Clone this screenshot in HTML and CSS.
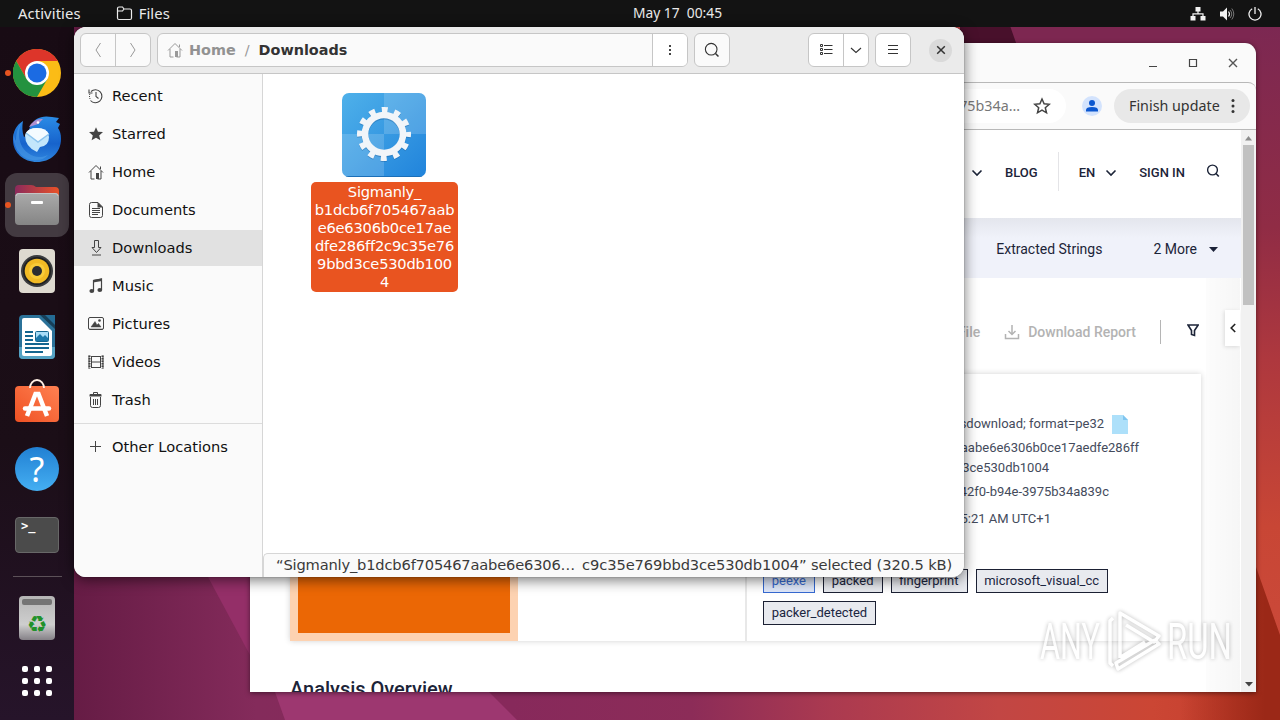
FILE: index.html
```html
<!DOCTYPE html>
<html lang="en">
<head>
    <meta charset="utf-8">
    <title>Desktop</title>
    <link rel="stylesheet" href="styles.css">
</head>
<body>
    <svg class="symbols" width="0" height="0">
        <symbol id="home" viewBox="0 0 16 16">
            <path d="M1 8.500 8 1.500l7 7M3 7v8h3.500M9.500 15H13V7M12.500 2.500V5" fill="none" stroke="currentColor"/>
            <path d="M8 9h3v6H8z" fill="currentColor"/>
        </symbol>
        <symbol id="chevron" viewBox="0 0 12 12">
            <path d="M1.500 3.500 6 8l4.500-4.500" fill="none" stroke="currentColor" stroke-width="1.600"/>
        </symbol>
    </svg>

    <svg class="wallpaper" viewBox="0 0 1280 720">
        <defs>
            <linearGradient id="wall" x1="0" x2="1" y1="0" y2="0">
                <stop offset=".058" stop-color="#661c45"/>
                <stop offset=".200" stop-color="#842b5b"/>
                <stop offset=".400" stop-color="#87295b"/>
                <stop offset=".540" stop-color="#8c2c58"/>
                <stop offset=".650" stop-color="#ab3a50"/>
                <stop offset=".780" stop-color="#c24644"/>
                <stop offset=".900" stop-color="#cb4634"/>
                <stop offset="1" stop-color="#c23c2b"/>
            </linearGradient>
            <linearGradient id="wallRight" x1="0" x2="0" y1="0" y2="1">
                <stop offset="0" stop-color="#7c2852"/>
                <stop offset=".300" stop-color="#902c45"/>
                <stop offset=".500" stop-color="#ae383e"/>
                <stop offset=".750" stop-color="#c84635"/>
                <stop offset="1" stop-color="#cc4a3b"/>
            </linearGradient>
            <linearGradient id="wallDark" gradientUnits="userSpaceOnUse" x1="1180" x2="1265" y1="0" y2="0">
                <stop offset="0" stop-color="#9b2817" stop-opacity="0"/>
                <stop offset="1" stop-color="#9b2817"/>
            </linearGradient>
        </defs>
        <rect width="1280" height="720" fill="url(#wall)"/>
        <path d="M275 692h214l28 28H285z" fill="#9d3770"/>
        <path d="M208 577h50v93z" fill="#942f68"/>
        <rect x="960" width="320" height="80" fill="#7d2751"/>
        <path d="M960 20h48l14 40h-62z" fill="#48102b"/>
        <rect x="1250" y="27" width="30" height="665" fill="url(#wallRight)"/>
        <path d="M1250 550l30 85v85H1180v-28h70z" fill="url(#wallDark)"/>
    </svg>

    <div class="topbar">
        <div class="topbar-left">
            <span>Activities</span>
            <span class="app-name">
                <svg width="17" height="15" viewBox="0 0 17 15"><path d="M1.500 12V2.500q0-1.500 1.500-1.500h3.500l1.500 2h6q1.500 0 1.500 1.500V12q0 1.500-1.500 1.500H3Q1.500 13.500 1.500 12zM1.500 5h5L8 3" fill="none" stroke="#eee" stroke-width="1.200"/></svg>
                <span>Files</span>
            </span>
        </div>
        <div class="clock">May 17&nbsp; 00:45</div>
        <div class="tray">
            <svg width="16" height="14" viewBox="0 0 16 14"><path d="M5.500 0h5v4.500h-5zM.500 9h5v4.500h-5zM10.500 9h5v4.500h-5z" fill="#f2f2f2"/><path d="M8 4v3M3 9V6.800h10V9" fill="none" stroke="#f2f2f2" stroke-width="1.200"/></svg>
            <svg width="16" height="14" viewBox="0 0 16 14"><path d="M1 4.500h3L8 .500v13l-4-4H1z" fill="#f2f2f2"/><path d="M9.500 4.500q2 2.500 0 5" fill="none" stroke="#f2f2f2" stroke-width="1.200"/><path d="M11 3q3.500 4 0 8M12.800 1.500q4 5.500 0 11" fill="none" stroke="#777"/></svg>
            <svg width="14" height="14" viewBox="0 0 14 14"><path d="M4.200 1.800a6 6 0 1 0 5.600 0M7 0v7" fill="none" stroke="#f2f2f2" stroke-width="1.300"/></svg>
        </div>
    </div>

    <div class="dock">
        <div class="dock-item running">
            <svg width="48" height="48" viewBox="0 0 48 48">
                <circle cx="24" cy="24" r="24" fill="#fbbc16"/>
                <path d="M3.200 12A24 24 0 0 1 44.800 12H24L13.600 30z" fill="#dd352a"/>
                <path d="M3.200 12A24 24 0 0 0 24 48L34.400 30 24 36 13.600 30z" fill="#23923f"/>
                <circle cx="24" cy="24" r="12" fill="#fff"/>
                <circle cx="24" cy="24" r="9.500" fill="#1b6be3"/>
            </svg>
        </div>
        <div class="dock-item">
            <svg width="48" height="48" viewBox="0 0 48 48">
                <defs>
                    <linearGradient id="bird" x1="0" x2="0" y1="0" y2="1"><stop stop-color="#2b8ce6"/><stop offset=".6" stop-color="#1763cc"/><stop offset="1" stop-color="#2f86de"/></linearGradient>
                </defs>
                <path d="M10 6C3 10 0 17 0 25c0 13 11 22 24 22s24-9 24-23c0-5-1-8-3-11l2-4-4-2 3-4-7-1c-10-2-18 1-22 10l-3 8-3 2c-2-5-2-11-1-16z" fill="url(#bird)"/>
                <path d="M10 6C4 13 4 30 15 38c6 5 14 5 20 2-5 6-16 7-24 2C2 36-1 24 1 18c0 4 1 6 2 8 0-8 2-15 7-20z" fill="#4a9ae6" opacity=".600"/>
                <path d="M16 12Q21 3 30 4l-5 5z" fill="#b08fd0"/>
                <circle cx="25" cy="7.500" r="1.300" fill="#fff"/>
                <path d="M12 20q2-7 12-7 11 0 12 9 0 9-9 10l-3 5q-12-5-12-17z" fill="#c3e6fb"/>
                <path d="M13 18q3-5 11-5 9 0 12 6l-11 8z" fill="#f4fbff"/>
                <path d="M13 18l12 9 11-8" fill="none" stroke="#8cc4ee" stroke-width="1.500"/>
            </svg>
        </div>
        <div class="dock-item running active">
            <svg width="44" height="42" viewBox="0 0 44 42">
                <defs>
                    <linearGradient id="folder"><stop stop-color="#8b2a5c"/><stop offset="1" stop-color="#e95228"/></linearGradient>
                    <linearGradient id="drawer" x1="0" x2="0" y1="0" y2="1"><stop stop-color="#aaa"/><stop offset="1" stop-color="#858585"/></linearGradient>
                </defs>
                <path d="M0 5q0-4 4-4h12q3 0 5 2h19q4 0 4 4v12H0z" fill="url(#folder)"/>
                <rect y="9" width="44" height="32" rx="4" fill="url(#drawer)"/>
                <path d="M1 12q0-2.500 3-2.500h36q3 0 3 2.500" fill="none" stroke="#c4c4c4"/>
                <rect x="16" y="17" width="12" height="3" rx="1" fill="#fff"/>
            </svg>
        </div>
        <div class="dock-item">
            <svg width="36" height="44" viewBox="0 0 36 44">
                <rect width="36" height="44" rx="4" fill="#dedad0"/>
                <circle cx="18" cy="22" r="16" fill="#3a3c3e"/>
                <circle cx="18" cy="22" r="14" fill="#1f2021"/>
                <circle cx="18" cy="22" r="12.300" fill="#f1ba24"/>
                <circle cx="18" cy="22" r="8" fill="#f8cb38"/>
                <circle cx="18" cy="22" r="5" fill="#2b2d31"/>
            </svg>
        </div>
        <div class="dock-item">
            <svg width="36" height="44" viewBox="0 0 36 44">
                <rect width="36" height="44" rx="4" fill="#2b7299"/>
                <path d="M0 32v8q0 4 4 4h28q4 0 4-4V32z" fill="#55a3c4"/>
                <path d="M5 3h15l13 13v23q0 2-2 2H5q-2 0-2-2V5q0-2 2-2z" fill="#fff"/>
                <path d="M21 0h15v14z" fill="#173f58"/>
                <path d="M26 0h10v10z" fill="#246b94"/>
                <path d="M6 17h8M6 21h8M6 25h8M6 29h24M6 33h24M6 37h18" stroke="#146690" stroke-width="2"/>
                <rect x="16.500" y="16.500" width="13" height="10" rx="1" fill="#a7dcf7" stroke="#146690"/>
                <path d="M17 26v-3l4-4 3 3 2-2 3 3v3z" fill="#1c78aa"/>
            </svg>
        </div>
        <div class="dock-item store">
            <svg width="44" height="44" viewBox="0 0 44 44">
                <defs><linearGradient id="bag" x1="0" x2="1" y1="1" y2="0"><stop stop-color="#ef5123"/><stop offset="1" stop-color="#ff8152"/></linearGradient></defs>
                <rect y="7" width="44" height="36" rx="4" fill="url(#bag)"/>
                <path d="M15 9a7 8 0 0 1 14 0" fill="none" stroke="#fff0e5" stroke-width="1.800"/>
                <path d="M12 37 20.500 15h3L32 37" fill="none" stroke="#fff" stroke-width="4.500"/>
                <path d="M10 29.500h24" stroke="#fff" stroke-width="4.500" stroke-linecap="round"/>
            </svg>
        </div>
        <div class="dock-item">
            <div class="help-icon">?</div>
        </div>
        <div class="dock-item">
            <div class="terminal-icon">&gt;_</div>
        </div>
        <div class="dock-divider"></div>
        <div class="dock-item">
            <div class="trash-icon">
                <span class="trash-slot"></span>
                <span class="recycle">♻</span>
            </div>
        </div>
        <div class="dock-item apps-button">
            <div class="apps-grid"><i></i><i></i><i></i><i></i><i></i><i></i><i></i><i></i><i></i></div>
        </div>
    </div>

    <div class="browser">
        <div class="browser-title">
            <svg width="10" height="12" viewBox="0 0 10 12"><path d="M1 9.500h8" stroke="#444"/></svg>
            <svg width="10" height="10" viewBox="0 0 10 10"><path d="M1.500 1.500h7v7h-7z" fill="none" stroke="#444" stroke-width="1.200"/></svg>
            <svg width="10" height="10" viewBox="0 0 10 10"><path d="M1 1l8 8M9 1 1 9" stroke="#555" stroke-width="1.400"/></svg>
        </div>
        <div class="browser-toolbar">
            <div class="address">
                <span>75b34a…</span>
                <svg width="18" height="18" viewBox="0 0 18 18"><path d="M9 2l2.100 4.800 5.200.500-4 3.400 1.200 5.100L9 13.100l-4.500 2.700 1.200-5.100-4-3.400 5.200-.500z" fill="none" stroke="#444" stroke-width="1.500"/></svg>
            </div>
            <div class="profile">
                <svg width="20" height="20" viewBox="0 0 20 20"><circle cx="10" cy="10" r="10" fill="#d3e3fd"/><circle cx="10" cy="7" r="3" fill="#0b57d0"/><path d="M4 15.500v-1.500q0-3 6-3t6 3v1.500z" fill="#0b57d0"/></svg>
            </div>
            <div class="update">
                <span>Finish update</span>
                <svg width="4" height="16" viewBox="0 0 4 16"><circle cx="2" cy="2.500" r="1.500" fill="#333"/><circle cx="2" cy="8" r="1.500" fill="#333"/><circle cx="2" cy="13.500" r="1.500" fill="#333"/></svg>
            </div>
        </div>
        <div class="viewport">
            <div class="page">
                <div class="site-nav">
                    <svg class="nav-arrow" width="12" height="12"><use href="#chevron"/></svg>
                    <span class="blog">BLOG</span>
                    <span class="lang">EN</span>
                    <svg class="nav-arrow" width="12" height="12"><use href="#chevron"/></svg>
                    <span class="sign-in">SIGN IN</span>
                    <svg class="nav-search" width="14" height="14" viewBox="0 0 14 14"><circle cx="6.500" cy="6" r="4.900" fill="none" stroke="#1c2438" stroke-width="1.400"/><path d="M10 9.500l2.800 3" stroke="#1c2438" stroke-width="1.600"/></svg>
                </div>
                <div class="tabs">
                    <span>Extracted Strings</span>
                    <span class="more">2 More</span>
                    <svg width="9" height="5" viewBox="0 0 9 5"><path d="M0 0h9L4.500 5z" fill="#1b2238"/></svg>
                </div>
                <div class="actions">
                    <span class="file">File</span>
                    <svg width="16" height="16" viewBox="0 0 16 16"><path d="M1.500 10v4.500h13V10M8 1v9M4.500 7 8 10.500 11.500 7" fill="none" stroke="#b3b3b3" stroke-width="1.500"/></svg>
                    <span class="report">Download Report</span>
                    <span class="filter"><svg width="12" height="13" viewBox="0 0 12 13"><path d="M1 1h10.200L7.500 6.500v5l-3-1v-4z" fill="none" stroke="#1c2438" stroke-width="1.600"/></svg></span>
                </div>
                <div class="report-card">
                    <div class="screenshot"><div class="shot"></div></div>
                    <div class="verdict"></div>
                    <div class="details">
                        <p class="mime">sdownload; format=pe32
                            <svg width="16" height="19" viewBox="0 0 16 19"><path d="M0 0h11l5 5v14H0z" fill="#ade0fa"/><path d="M11 0v5h5z" fill="#80c5ef"/></svg>
                        </p>
                        <p class="hash">aabe6e6306b0ce17aedfe286ff</p>
                        <p class="hash-end">3ce530db1004</p>
                        <p class="uuid">42f0-b94e-3975b34a839c</p>
                        <p class="time">5:21 AM UTC+1</p>
                        <div class="tags">
                            <span class="tag blue">peexe</span>
                            <span class="tag">packed</span>
                            <span class="tag">fingerprint</span>
                            <span class="tag">microsoft_visual_cc</span>
                            <span class="tag">packer_detected</span>
                        </div>
                    </div>
                </div>
                <h2 class="overview">Analysis Overview</h2>
                <div class="side-shade"></div>
                <div class="side-toggle"><svg width="8" height="10" viewBox="0 0 8 10"><path d="M6.200 1 2.200 5l4 4" fill="none" stroke="#222" stroke-width="1.600"/></svg></div>
            </div>
            <div class="scrollbar">
                <svg width="7" height="5" viewBox="0 0 7 5"><path d="M0 4.500h7L3.500 0z" fill="#8c8c8c"/></svg>
                <div class="thumb"></div>
                <svg width="8" height="5" viewBox="0 0 8 5"><path d="M0 0h8L4 4.500z" fill="#444"/></svg>
            </div>
        </div>
    </div>

    <div class="files">
        <div class="files-header">
            <div class="button-group nav-buttons">
                <span><svg width="8" height="18" viewBox="0 0 8 18"><path d="M6.500 2 2 9l4.500 7" fill="none" stroke="#999"/></svg></span>
                <span><svg width="8" height="18" viewBox="0 0 8 18"><path d="M1.500 2 6 9l-4.500 7" fill="none" stroke="#999"/></svg></span>
            </div>
            <div class="button-group pathbar">
                <div class="crumbs">
                    <svg width="16" height="16"><use href="#home"/></svg>
                    <b class="parent">Home</b>
                    <span class="slash">/</span>
                    <b>Downloads</b>
                </div>
                <span class="path-menu"><svg width="4" height="12" viewBox="0 0 4 12"><path d="M1 1h2v2H1zM1 5h2v2H1zM1 9h2v2H1z" fill="#444"/></svg></span>
            </div>
            <div class="button-group search"><span><svg width="16" height="16" viewBox="0 0 16 16"><circle cx="7.200" cy="7.200" r="5.800" fill="none" stroke="#333" stroke-width="1.100"/><path d="M11.500 11.500 14.500 14.500" stroke="#333" stroke-width="1.500"/></svg></span></div>
            <div class="button-group view">
                <span><svg width="14" height="12" viewBox="0 0 14 12"><path d="M1.500.500h2v2h-2zM1.500 4.500h2v2h-2zM1.500 8.500h2v2h-2zM5 1.500h8.500M5 5.500h8.500M5 9.500h8.500" fill="none" stroke="#333"/></svg></span>
                <span class="narrow"><svg width="12" height="8" viewBox="0 0 12 8"><path d="M1 2l5 4.500L11 2" fill="none" stroke="#333" stroke-width="1.100"/></svg></span>
            </div>
            <div class="button-group menu"><span><svg width="12" height="12" viewBox="0 0 12 12"><path d="M1 1.500h10M1 5.500h10M1 9.500h10" stroke="#333"/></svg></span></div>
            <div class="close"><svg width="10" height="10" viewBox="0 0 10 10"><path d="M1.200 1.200l7.600 7.600M8.800 1.200 1.200 8.800" stroke="#333" stroke-width="1.500"/></svg></div>
        </div>
        <div class="files-body">
            <div class="sidebar">
                <div class="place"><svg width="16" height="16" viewBox="0 0 16 16"><path d="M3 3.500A6.500 6.500 0 1 1 2.500 12.500M8 4v4.500l2.500 2M1 1.500v3.500h3.500" fill="none" stroke="#444" stroke-width="1.100"/><path d="M1 8.500h1M1.200 6.500h1M1.400 10.500h1" stroke="#444"/></svg><span>Recent</span></div>
                <div class="place"><svg width="16" height="16" viewBox="0 0 16 16"><path d="M8 1.200l2 4.500 5 .400-3.800 3.300 1.200 4.900L8 11.700l-4.400 2.600 1.200-4.900L1 6.100l5-.400z" fill="#444"/></svg><span>Starred</span></div>
                <div class="place"><svg width="16" height="16"><use href="#home"/></svg><span>Home</span></div>
                <div class="place"><svg width="16" height="16" viewBox="0 0 16 16"><path d="M3.500.500H10L14.500 5v8.500q0 2-2 2h-9q-2 0-2-2v-11q0-2 2-2zM4 6.500h8M4 8.500h8M4 10.500h8M4 12.500h6" fill="none" stroke="#444"/><path d="M9.500 0 15 5.500H9.500z" fill="#444"/></svg><span>Documents</span></div>
                <div class="place selected"><svg width="16" height="16" viewBox="0 0 16 16"><path d="M6.500.500h4v7H13l-4.500 5L4 7.500h2.500zM4 15h9" fill="none" stroke="#444"/></svg><span>Downloads</span></div>
                <div class="place"><svg width="16" height="16" viewBox="0 0 16 16"><path d="M5.500 13V2.500L13.500 1v11" fill="none" stroke="#444" stroke-width="1.200"/><path d="M5 2l9-1.500V3L5 4.500z" fill="#444"/><ellipse cx="3.800" cy="13" rx="2.400" ry="2" fill="#444"/><ellipse cx="11.800" cy="12" rx="2.400" ry="2" fill="#444"/></svg><span>Music</span></div>
                <div class="place"><svg width="16" height="16" viewBox="0 0 16 16"><rect x=".500" y="1.500" width="15" height="12" rx="1.500" fill="none" stroke="#444"/><path d="M3 11l4-5.500L9 9l1.500-1.500L13 11zM1 13h14" fill="#444" stroke="#444" stroke-width=".500"/><circle cx="11.500" cy="4.500" r="1.300" fill="#444"/></svg><span>Pictures</span></div>
                <div class="place"><svg width="16" height="16" viewBox="0 0 16 16"><path d="M3.500 2v12M12.500 2v12M3.500 2.500h9M3.500 8h9M3.500 13.500h9" fill="none" stroke="#444"/><path d="M1.500 1.500v13M14.500 1.500v13" stroke="#444" stroke-width="2" stroke-dasharray="1.500 1"/><path d="M1 1.500v13M15 1.500v13" stroke="#444"/></svg><span>Videos</span></div>
                <div class="place"><svg width="16" height="16" viewBox="0 0 16 16"><path d="M2.500 5v8.500q0 2 2 2h6q2 0 2-2V5M5.500 7v6M7.500 7v6M9.500 7v6M5.500 2V.500h4V2" fill="none" stroke="#444"/><path d="M1.500 4.500V3q0-1 1-1h10q1 0 1 1v1.500z" fill="#444"/></svg><span>Trash</span></div>
                <div class="separator"></div>
                <div class="place"><svg width="16" height="16" viewBox="0 0 16 16"><path d="M7.500 2v11M2 7.500h11" stroke="#444"/></svg><span>Other Locations</span></div>
            </div>
            <div class="folder-view">
                <div class="file-item">
                    <svg width="86" height="86" viewBox="0 0 86 86">
                        <defs>
                            <linearGradient id="tileA" x1="0" x2="1" y1="0" y2="1"><stop stop-color="#4fb1ea"/><stop offset="1" stop-color="#2083db"/></linearGradient>
                            <clipPath id="tile"><rect x="1" y="1" width="84" height="84" rx="7"/></clipPath>
                        </defs>
                        <g clip-path="url(#tile)">
                            <rect width="86" height="86" fill="url(#tileA)"/>
                            <path d="M43 0h43v42H43zM0 42h43v44H0z" fill="#fff" opacity=".160"/>
                            <path d="M0 84.500h86" stroke="#1b6fb8"/>
                        </g>
                        <g fill="none" stroke="#1b5e9b" opacity=".400" transform="translate(0 1)">
                            <circle cx="43" cy="42" r="19" stroke-width="6.800"/>
                            <circle cx="43" cy="42" r="24" stroke-width="6" stroke-dasharray="6 6.566" stroke-dashoffset="3"/>
                        </g>
                        <g fill="none" stroke="#f1f5f9">
                            <circle cx="43" cy="42" r="19" stroke-width="6.600"/>
                            <circle cx="43" cy="42" r="24" stroke-width="6" stroke-dasharray="6 6.566" stroke-dashoffset="3"/>
                        </g>
                    </svg>
                    <div class="file-name">Sigmanly_<br>b1dcb6f705467aab<br>e6e6306b0ce17ae<br>dfe286ff2c9c35e76<br>9bbd3ce530db100<br>4</div>
                </div>
                <div class="statusbar">“Sigmanly_b1dcb6f705467aabe6e6306…&nbsp; <span>c9c35e769bbd3ce530db1004” selected (320.5 kB)</span></div>
            </div>
        </div>
    </div>

    <svg class="watermark" width="204" height="66" viewBox="0 0 204 66">
        <text x="3" y="51" textLength="60" lengthAdjust="spacingAndGlyphs">ANY</text>
        <path d="M76 10l-3 3v42l3 3M83 50V5l39 23-5 6-28-17M84 49l24-15M81 61l41-25-4-4-39 23z" fill="none" stroke="#fff" stroke-width="3.500" stroke-linejoin="round"/>
        <text x="130" y="51" textLength="65" lengthAdjust="spacingAndGlyphs">RUN</text>
    </svg>
</body>
</html>
```
FILE: styles.css
```css
body {
    margin: 0;
    width: 1280px;
    height: 720px;
    overflow: hidden;
    position: relative;
    font-family: "DejaVu Sans", sans-serif;
    background-color: #6b1e48;
}

svg {
    display: block;
    flex-shrink: 0;
}

.symbols {
    position: absolute;
}

.wallpaper {
    position: absolute;
    top: 0;
    left: 0;
    width: 1280px;
    height: 720px;
}

/* top bar */
.topbar {
    position: relative;
    height: 27px;
    background-color: #131313;
    color: #eaeaea;
    font-family: "Noto Sans", sans-serif;
    font-size: 14.8px;
    display: grid;
    grid-template-columns: 1fr auto 1fr;
    align-items: center;
    line-height: 20px;
}

.topbar-left {
    display: flex;
    padding-left: 18px;
    gap: 35px;
    letter-spacing: 0.1px;
}

.topbar-left span {
    margin-top: -1px;
}

.app-name {
    display: flex;
    align-items: center;
    gap: 6px;
}

.clock {
    padding-left: 75px;
    font-size: 13.8px;
    line-height: 26px;
    padding-bottom: 1px;
}

.tray {
    display: flex;
    justify-content: flex-end;
    gap: 13px;
    padding-right: 18px;
}

/* dock */
.dock {
    position: relative;
    width: 74px;
    height: 679px;
    padding-top: 14px;
    background: linear-gradient(#180b14, #1b0e17 60%, #26142a);
    display: flex;
    flex-direction: column;
    align-items: center;
    gap: 2px;
}

.dock-item {
    width: 64px;
    height: 64px;
    border-radius: 12px;
    display: flex;
    align-items: center;
    justify-content: center;
    position: relative;
    flex-shrink: 0;
}

.dock-item.active {
    background-color: #433a41;
}

.dock-item.running::before {
    content: "";
    position: absolute;
    left: 0;
    top: 29px;
    width: 6px;
    height: 6px;
    border-radius: 50%;
    background-color: #e95420;
}

.dock-item.store {
    box-sizing: border-box;
    padding-bottom: 5px;
}

.help-icon {
    width: 44px;
    height: 44px;
    border-radius: 50%;
    background: linear-gradient(#2180d3, #45aff2);
    color: #fff;
    font: 34px/44px "Noto Sans", sans-serif;
    text-align: center;
}

.terminal-icon {
    box-sizing: border-box;
    width: 44px;
    height: 36px;
    padding: 1px 5px;
    border: 1px solid #686868;
    border-radius: 4px;
    background-color: #4b4b4b;
    color: #fff;
    font: bold 12px/14px "DejaVu Sans Mono", monospace;
}

.dock-divider {
    width: 49px;
    height: 1px;
    margin: 7px 0;
    background-color: #5c5158;
}

.trash-icon {
    width: 36px;
    height: 44px;
    border-radius: 4px;
    background: linear-gradient(#b5b5b5, #cecece 65%, #858187);
    display: flex;
    flex-direction: column;
    align-items: center;
}

.trash-slot {
    width: 30px;
    height: 6px;
    margin-top: 3px;
    border-radius: 2px;
    background-color: #747474;
}

.recycle {
    color: #21912a;
    font-size: 23px;
    line-height: 24px;
    margin-top: 7px;
}

.apps-button {
    margin-top: -3px;
}

.apps-grid {
    display: grid;
    grid-template-columns: repeat(3, 6px);
    gap: 6px;
}

.apps-grid i {
    height: 6px;
    border-radius: 2px;
    background-color: #fff;
}

/* browser window */
.browser {
    position: absolute;
    left: 250px;
    top: 43px;
    width: 1006px;
    height: 649px;
    border-radius: 11px 11px 0 0;
    background-color: #fafafa;
    box-shadow: 0 1px 5px rgba(0,0,0,0.5);
    overflow: hidden;
    display: flex;
    flex-direction: column;
}

.browser-title {
    height: 39px;
    display: flex;
    justify-content: flex-end;
    align-items: center;
    gap: 30px;
    padding-right: 18px;
}

.browser-toolbar {
    box-sizing: border-box;
    height: 48px;
    border: 1px solid #b8b8b8;
    border-width: 1px 0;
    border-radius: 0 8px 0 0;
    display: flex;
    align-items: center;
    justify-content: flex-end;
    font-family: "Noto Sans", sans-serif;
    font-size: 14.3px;
    color: #333;
    padding-right: 6px;
}

.browser-toolbar span {
    padding-bottom: 2px;
}

.address {
    flex: 1;
    height: 34px;
    border-radius: 17px;
    background-color: #fff;
    display: flex;
    align-items: center;
    justify-content: flex-end;
    gap: 13px;
    padding-right: 15px;
    color: #777;
}

.profile {
    padding: 0 12px 0 16px;
}

.update {
    box-sizing: border-box;
    width: 136px;
    height: 34px;
    border-radius: 17px;
    background-color: #e8e8e8;
    display: flex;
    align-items: center;
    justify-content: space-between;
    padding: 0 15px;
    white-space: nowrap;
}

.viewport {
    flex: 1;
    min-height: 0;
    display: flex;
    background-color: #fff;
}

.page {
    flex: 1;
    position: relative;
    overflow: hidden;
    font-family: Roboto, sans-serif;
    color: #1c2438;
}

.site-nav {
    box-sizing: border-box;
    height: 88px;
    display: flex;
    align-items: center;
    justify-content: flex-end;
    padding: 0 21px 3px 0;
    font-size: 13px;
    font-weight: 500;
}

.nav-arrow {
    color: #1c2438;
}

.blog {
    margin-left: 22px;
}

.lang {
    margin: -2px 10px 0 20px;
    height: 39px;
    line-height: 41px;
    border-left: 1px solid #e4e4e7;
    padding-left: 20px;
}

.sign-in {
    margin: 0 21px 0 22px;
}

.nav-search {
    margin-top: -3px;
}

.tabs {
    box-sizing: border-box;
    height: 60px;
    background: linear-gradient(#e4e6ed, #f0f2fa 20px);
    display: flex;
    align-items: center;
    justify-content: flex-end;
    padding: 2px 23px 0 0;
    font-size: 14px;
    line-height: 24px;
}

.more {
    margin: 0 12px 0 51px;
}

.actions {
    height: 96px;
    display: flex;
    align-items: center;
    justify-content: flex-end;
    padding: 12px 42px 0 0;
    box-sizing: border-box;
    font-size: 14px;
    font-weight: 500;
    line-height: 24px;
    color: #b3b3b3;
}

.file {
    margin-right: 24px;
}

.report {
    margin-left: 8px;
}

.filter {
    margin-left: 24px;
    padding: 0 0 3px 26px;
    height: 21px;
    border-left: 1px solid #b5b5b5;
    display: flex;
    align-items: center;
}

.report-card {
    margin: 0 40px;
    height: 267px;
    box-shadow: 0 0 6px rgba(0,0,0,0.18);
    display: flex;
}

.screenshot {
    box-sizing: border-box;
    width: 228px;
    padding: 8px;
    background-color: #fdd2b1;
}

.shot {
    height: 251px;
    background-color: #eb6705;
}

.verdict {
    flex: 1;
    border-right: 2px solid #e8e8e8;
}

.details {
    box-sizing: border-box;
    width: 454px;
    padding: 40px 0 0 16px;
    font-size: 13px;
    color: #444b5c;
}

.details p {
    margin: 0;
    line-height: 20px;
    text-align: right;
}

.details .mime {
    display: flex;
    justify-content: flex-end;
    gap: 8px;
    padding-right: 73px;
    margin-bottom: 4px;
}

.mime svg {
    margin-top: 1px;
}

.details .hash {
    padding-right: 62px;
}

.details .hash-end {
    padding-right: 152px;
    margin-bottom: 4px;
}

.details .uuid {
    padding-right: 92px;
    margin-bottom: 7px;
}

.details .time {
    padding-right: 150px;
}

.tags {
    display: flex;
    flex-wrap: wrap;
    gap: 8px;
    margin-top: 40px;
}

.tag {
    border: 1px solid #1b2033;
    background-color: #e8eaef;
    color: #1b2540;
    line-height: 22px;
    padding: 0 8px 0 7.7px;
}

.tag.blue {
    border-color: #3569d1;
    background-color: #dfe8fa;
    color: #3569d1;
}

.overview {
    margin: 35px 0 0 40px;
    font-size: 20px;
    font-weight: 500;
    line-height: 26px;
}

.side-shade {
    position: absolute;
    right: 1px;
    top: 148px;
    bottom: 0;
    width: 34px;
    background: linear-gradient(to right, rgba(0,0,0,0.01), rgba(0,0,0,0.035));
}

.side-toggle {
    position: absolute;
    right: 1px;
    top: 180px;
    width: 15px;
    height: 36px;
    background-color: #fff;
    box-shadow: -1px 1px 4px rgba(0,0,0,0.12);
    display: flex;
    align-items: center;
    justify-content: center;
}

.scrollbar {
    width: 15px;
    background-color: #f1f1f1;
    display: flex;
    flex-direction: column;
    align-items: center;
    padding: 6px 0 5px;
    box-sizing: border-box;
}

.thumb {
    width: 11px;
    height: 160px;
    margin: 4px 0 auto;
    background-color: #c1c1c1;
}

/* file manager window */
.files {
    position: absolute;
    left: 74px;
    top: 27px;
    width: 890px;
    height: 550px;
    border-radius: 12px;
    background-color: #fff;
    box-shadow: 0 0 1px rgba(0,0,0,0.7), 0 3px 14px rgba(0,0,0,0.55);
    overflow: hidden;
    display: flex;
    flex-direction: column;
    font-size: 14.67px;
    color: #111;
}

.files-header {
    height: 46px;
    border-bottom: 1px solid #c6c6c6;
    background-color: #ebebeb;
    display: flex;
    align-items: center;
    padding: 0 12px 0 6px;
}

.button-group {
    box-sizing: border-box;
    height: 34px;
    border: 1px solid #c6c6c6;
    border-radius: 6px;
    background-color: #fafafa;
    display: flex;
}

.button-group > span {
    width: 34px;
    display: flex;
    align-items: center;
    justify-content: center;
}

.button-group > * + span {
    border-left: 1px solid #c6c6c6;
}

.button-group > .narrow {
    width: 24px;
}

.nav-buttons {
    margin-right: 6px;
}

.pathbar {
    flex: 1;
    margin-right: 6px;
}

.crumbs {
    flex: 1;
    display: flex;
    align-items: center;
    padding-left: 9px;
    font-size: 14.4px;
    color: #333;
}

.crumbs svg {
    color: #999;
    margin-right: 6px;
}

.parent {
    color: #929292;
}

.slash {
    color: #999;
    margin: 0 9px;
}

.path-menu,
.view,
.menu {
    background-color: #fff;
}

.path-menu {
    border-radius: 0 5px 5px 0;
}

.view {
    margin: 0 6px 0 78px;
}

.close {
    width: 23px;
    height: 23px;
    margin-left: 18px;
    border-radius: 50%;
    background-color: #dadada;
    display: flex;
    align-items: center;
    justify-content: center;
}

.files-body {
    flex: 1;
    display: flex;
}

.sidebar {
    width: 188px;
    padding-top: 4px;
    border-right: 1px solid #d6d6d6;
    background-color: #fafafa;
    display: flex;
    flex-direction: column;
    gap: 2px;
}

.place {
    height: 36px;
    display: flex;
    align-items: center;
    gap: 8px;
    padding-left: 14px;
}

.place span {
    padding-bottom: 2px;
}

.place svg {
    color: #444;
}

.place.selected {
    background-color: #e1e1e1;
}

.separator {
    height: 1px;
    margin: 3px 0;
    background-color: #dcdcdc;
}

.folder-view {
    flex: 1;
    display: flex;
    flex-direction: column;
    justify-content: space-between;
}

.file-item {
    width: 147px;
    padding: 18px 0 0 48px;
    display: flex;
    flex-direction: column;
    align-items: center;
}

.file-item svg {
    margin-right: 2px;
}

.file-name {
    box-sizing: border-box;
    width: 147px;
    margin-top: 4px;
    padding: 1px 0;
    border-radius: 5px;
    background-color: #e95420;
    color: #fff;
    font-size: 14.67px;
    line-height: 18px;
    letter-spacing: -0.22px;
    text-align: center;
}

.statusbar {
    height: 23px;
    border-top: 1px solid #d6d6d6;
    border-left: 1px solid #d6d6d6;
    border-top-left-radius: 5px;
    background-color: #fafafa;
    color: #3a3a3a;
    line-height: 21px;
    padding-left: 12px;
    white-space: nowrap;
    letter-spacing: -0.18px;
    word-spacing: -1px;
}

.statusbar span {
    letter-spacing: -0.1px;
    word-spacing: 0;
}

/* corner logo */
.watermark {
    position: absolute;
    left: 1037px;
    top: 608px;
    opacity: 0.6;
    filter: drop-shadow(0 0 2px rgba(0,0,0,0.45));
}

.watermark text {
    font: 400 50px Roboto, sans-serif;
    fill: #fff;
}
```
